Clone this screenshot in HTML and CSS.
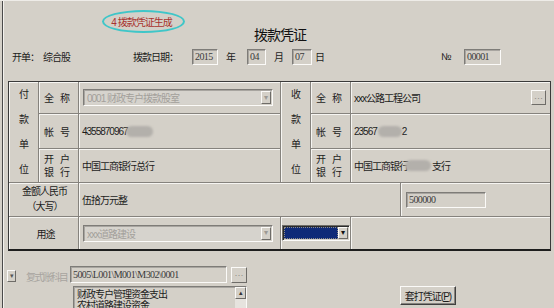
FILE: index.html
```html
<!DOCTYPE html>
<html>
<head>
<meta charset="utf-8">
<link rel="stylesheet" href="styles.css">
</head>
<body>
<div class="win">
  <div class="head">
    <div class="title-row">
      <div class="note">4 拨款凭证生成</div>
      <div class="title">拨款凭证</div>
    </div>
    <div class="info-row">
      <span class="t w31">开单：</span>
      <span class="t w90">综合股</span>
      <span class="t w59">拨款日期：</span>
      <span class="field w26">2015</span>
      <span class="t u1">年</span>
      <span class="field w19">04</span>
      <span class="t u2">月</span>
      <span class="field w20">07</span>
      <span class="t u3">日</span>
      <span class="t no">№</span>
      <span class="field w37">00001</span>
    </div>
  </div>

  <div class="grid">
    <div class="cell side s-left"><span>付</span><span>款</span><span>单</span><span>位</span></div>
    <div class="cell lab r1 c2">全称</div>
    <div class="cell val r1 c3"><div class="combo dis w189"><span class="ctext">0001 财政专户拨款股室</span><span class="abtn">&#9662;</span></div></div>
    <div class="cell side s-right"><span>收</span><span>款</span><span>单</span><span>位</span></div>
    <div class="cell lab r1 c5">全称</div>
    <div class="cell val r1 c67 between"><span>xxx公路工程公司</span><span class="dots">···</span></div>

    <div class="cell lab r2 c2">帐号</div>
    <div class="cell val r2 c3"><span>4355870967</span><span class="blob b1"></span></div>
    <div class="cell lab r2 c5">帐号</div>
    <div class="cell val r2 c67"><span>23567</span><span class="blob b2"></span><span>2</span></div>

    <div class="cell lab two r3 c2"><span>开户</span><span>银行</span></div>
    <div class="cell val r3 c3">中国工商银行总行</div>
    <div class="cell lab two r3 c5"><span>开户</span><span>银行</span></div>
    <div class="cell val r3 c67"><span>中国工商银行</span><span class="blob b3"></span><span>支行</span></div>

    <div class="cell amt r4 c12"><span>金额人民币</span><span>（大写）</span></div>
    <div class="cell val r4 c36">伍拾万元整</div>
    <div class="cell val r4 c7"><span class="field w80">500000</span></div>

    <div class="cell plain r5 c12">用途</div>
    <div class="cell val r5 c3"><div class="combo dis w189"><span class="ctext">xxx道路建设</span><span class="abtn">&#9662;</span></div></div>
    <div class="cell val r5 c45"><div class="combo blue"><span class="bluefill"></span><span class="abtn dark">&#9662;</span></div></div>
    <div class="cell r5 c67"></div>
  </div>

  <div class="bottom">
    <div class="sub-row">
      <span class="chk">&#9662;</span>
      <span class="subj">复式账科目</span>
      <span class="field w157">5005\L001\M001\M302\0001</span>
      <span class="dots big">···</span>
    </div>
    <div class="memo-row">
      <div class="memo">
        <div class="memo-text">财政专户管理资金支出<br>农村道路建设资金</div>
        <div class="sbar"><span class="sup">&#9652;</span></div>
      </div>
      <button class="print">套打凭证(<u>P</u>)</button>
    </div>
  </div>
</div>
</body>
</html>
```

FILE: styles.css
```css
html, body {
  margin: 0;
  padding: 0;
  background: #d4d0c8;
}
body {
  font-family: "Liberation Sans", "Noto Sans CJK SC", sans-serif;
  font-size: 10px;
  letter-spacing: -1px;
  color: #1c1c1c;
}
.win {
  width: 554px;
  height: 308px;
  overflow: hidden;
  background: linear-gradient(to right, #d4d0c8 2px, #4a4a4a 2px, #4a4a4a 3px, #f4f2ee 3px, #f4f2ee 4px, #d4d0c8 4px);
  border-top: 1px solid #eeece8;
  box-sizing: border-box;
}
.head {
  height: 80px;
  box-sizing: border-box;
}
.title-row {
  display: flex;
  align-items: flex-start;
  padding-left: 102px;
  padding-top: 9px;
  height: 46px;
  box-sizing: border-box;
}
.note {
  width: 83px;
  height: 23px;
  box-sizing: border-box;
  border: 2px solid #3fc6c8;
  border-radius: 50%;
  color: #a8322e;
  display: flex;
  align-items: center;
  justify-content: center;
  padding-right: 4px;
  font-size: 10px;
  white-space: nowrap;
}
.title {
  margin-left: 69px;
  margin-top: 14px;
  font-size: 14px;
  letter-spacing: -1px;
  color: #111;
}
.info-row {
  display: flex;
  align-items: center;
  padding-left: 12px;
  height: 17px;
  margin-top: 1px;
}
.t { display: inline-block; white-space: nowrap; }
.w31 { width: 31px; }
.w90 { width: 90px; }
.w59 { width: 59px; }
.u1 { margin-left: 8px; width: 21px; }
.u2 { margin-left: 8px; width: 18px; }
.u3 { margin-left: 3px; width: 126px; }
.no { width: 23px; }

.field {
  display: inline-flex;
  align-items: center;
  height: 16px;
  box-sizing: border-box;
  border: 1px solid;
  border-color: #7e7c78 #fbfaf8 #fbfaf8 #7e7c78;
  box-shadow: inset 1px 1px 0 #a8a5a0;
  padding-left: 2px;
  color: #3a3a3a;
  background: #d4d0c8;
  font-family: "Liberation Serif", "Noto Sans CJK SC", serif;
  font-size: 10px;
  letter-spacing: -0.6px;
  white-space: nowrap;
}
.w26 { width: 26px; }
.w19 { width: 19px; }
.w20 { width: 20px; }
.w37 { width: 37px; }
.w80 { width: 80px; }
.w157 { width: 157px; height: 17px; }

.grid {
  margin-left: 8px;
  width: 543px;
  box-sizing: border-box;
  border: 1px solid #3a3a3a;
  border-bottom: 2px solid #1e1e1e;
  display: grid;
  grid-template-columns: 29px 39px 201px 29px 39px 49px 149px;
  grid-template-rows: 31px 34px 33px 33px 32px;
  gap: 1px;
  background: #85827d;
}
.cell {
  background: #d4d0c8;
  box-shadow: inset 1px 1px 0 #f6f5f2;
  display: flex;
  align-items: center;
  min-width: 0;
}
.side {
  grid-row: 1 / 4;
  flex-direction: column;
  justify-content: space-between;
  align-items: center;
  padding: 4px 0 6px;
  box-sizing: border-box;
}
.s-left { grid-column: 1; }
.s-right { grid-column: 4; }
.r1 { grid-row: 1; }
.r2 { grid-row: 2; }
.r3 { grid-row: 3; }
.r4 { grid-row: 4; }
.r5 { grid-row: 5; }
.c2 { grid-column: 2; }
.c3 { grid-column: 3; }
.c5 { grid-column: 5; }
.c67 { grid-column: 6 / 8; }
.c12 { grid-column: 1 / 3; }
.c36 { grid-column: 3 / 7; }
.c7 { grid-column: 7; }
.c45 { grid-column: 4 / 6; }

.lab {
  justify-content: center;
  letter-spacing: 6px;
  padding-left: 3px;
}
.lab.two {
  flex-direction: column;
  line-height: 13px;
  padding-top: 1px;
}
.amt {
  flex-direction: column;
  justify-content: center;
  line-height: 15px;
  padding-left: 2px;
  padding-bottom: 1px;
}
.plain {
  justify-content: center;
  padding-left: 4px;
}
.val {
  padding-left: 3px;
  white-space: nowrap;
}
.c7.val { padding-left: 5px; }
.c45.val { padding-left: 1px; }
.between {
  justify-content: space-between;
  padding-right: 4px;
}

.combo {
  display: flex;
  align-items: stretch;
  height: 17px;
  box-sizing: border-box;
  border: 1px solid;
  border-color: #7e7c78 #fbfaf8 #fbfaf8 #7e7c78;
  box-shadow: inset 1px 1px 0 #a8a5a0;
  padding: 1px;
}
.w189 { width: 190px; margin-left: 1px; }
.ctext {
  flex: 1;
  color: #a3a09b;
  padding-left: 2px;
  display: flex;
  align-items: center;
  background: #d6d3cd;
}
.abtn {
  width: 10px;
  box-sizing: border-box;
  border: 1px solid;
  border-color: #fbfaf8 #6e6c68 #6e6c68 #fbfaf8;
  background: #d4d0c8;
  font-size: 8px;
  letter-spacing: 0;
  color: #9c9994;
  display: flex;
  align-items: center;
  justify-content: center;
  line-height: 1;
}
.abtn.dark { color: #111; width: 10px; }
.combo.blue {
  width: 69px;
  height: 16px;
  border-color: #6e6c68 #fbfaf8 #fbfaf8 #6e6c68;
  box-shadow: inset 1px 1px 0 #2a2a2a;
}
.bluefill {
  flex: 1;
  background: #0f2a78;
  border: 1px dotted #8f8c86;
}

.dots {
  width: 15px;
  height: 15px;
  box-sizing: border-box;
  border: 1px solid;
  border-color: #fbfaf8 #6e6c68 #6e6c68 #fbfaf8;
  color: #8c8984;
  font-size: 9px;
  letter-spacing: 0;
  display: flex;
  align-items: center;
  justify-content: center;
}
.dots.big { width: 16px; height: 16px; margin-left: 4px; }

.blob {
  display: inline-block;
  height: 11px;
  border-radius: 6px;
  background: #b3b0ab;
  filter: blur(1px);
}
.b1 { width: 27px; margin-left: -2px; }
.b2 { width: 24px; margin-left: 1px; margin-right: 0px; }
.b3 { width: 26px; margin-left: -3px; margin-right: 1px; }

.bottom {
  padding-top: 15px;
}
.sub-row {
  display: flex;
  align-items: center;
  height: 17px;
  padding-left: 7px;
}
.chk {
  width: 9px;
  height: 12px;
  box-sizing: border-box;
  border: 1px solid;
  border-color: #fbfaf8 #6e6c68 #6e6c68 #fbfaf8;
  font-size: 7px;
  letter-spacing: 0;
  color: #555;
  display: flex;
  align-items: center;
  justify-content: center;
  margin-top: 3px;
}
.subj {
  width: 54px;
  flex: none;
  color: #a7a49f;
  padding-left: 10px;
  box-sizing: border-box;
  white-space: nowrap;
  letter-spacing: -1.8px;
  margin-top: 3px;
}
.memo-row {
  display: flex;
  align-items: flex-start;
  margin-top: 3px;
  padding-left: 73px;
}
.memo {
  width: 174px;
  height: 30px;
  box-sizing: border-box;
  border: 1px solid;
  border-color: #7e7c78 #fbfaf8 #fbfaf8 #7e7c78;
  box-shadow: inset 1px 1px 0 #a8a5a0;
  display: flex;
}
.memo-text {
  flex: 1;
  padding: 2px 0 0 3px;
  line-height: 11px;
  color: #1c1c1c;
}
.sbar {
  width: 11px;
  background: #e6e3de;
}
.sup {
  display: flex;
  width: 11px;
  height: 12px;
  box-sizing: border-box;
  border: 1px solid;
  border-color: #fbfaf8 #6e6c68 #6e6c68 #fbfaf8;
  background: #d4d0c8;
  font-size: 7px;
  letter-spacing: 0;
  align-items: center;
  justify-content: center;
  color: #333;
}
.print {
  margin-left: 153px;
  width: 56px;
  height: 19px;
  padding: 0;
  font-family: "Liberation Sans", "Noto Sans CJK SC", sans-serif;
  font-size: 10px;
  letter-spacing: -1px;
  color: #1c1c1c;
  background: #d4d0c8;
  border: 1px solid;
  border-color: #fbfaf8 #404040 #404040 #fbfaf8;
  box-shadow: inset -1px -1px 0 #85827d;
}
```
